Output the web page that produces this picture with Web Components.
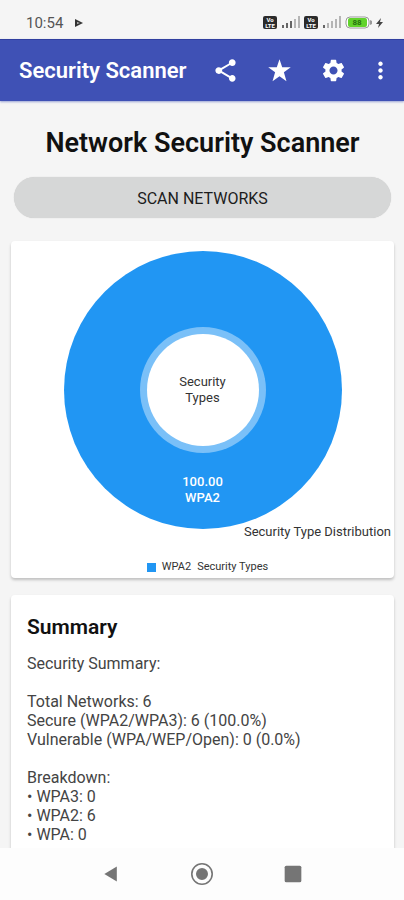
<!DOCTYPE html>
<html lang="en">
<head>
<meta charset="utf-8">
<meta name="viewport" content="width=device-width, initial-scale=1">
<title>Security Scanner</title>
<style>
  body {
    margin: 0;
    font-family: Roboto, "Liberation Sans", sans-serif;
    color: #212121;
    background: #f5f5f5;
  }
</style>
</head>
<body>
<scanner-app></scanner-app>

<script>
class StatusBar extends HTMLElement {
  constructor() {
    super();
    this.attachShadow({ mode: 'open' });
  }

  connectedCallback() {
    const time = this.getAttribute('time');
    const battery = this.getAttribute('battery');
    const volte = `
      <svg width="14" height="13" viewBox="0 0 14 13">
        <rect width="14" height="13" rx="2" fill="#2b2b2b"/>
        <text x="7" y="6" class="tiny">Vo</text>
        <text x="7" y="12" class="tiny">LTE</text>
      </svg>`;
    const signal = (strong) => `
      <svg width="19" height="13" viewBox="0 0 19 13">
        ${[3, 5, 7, 9, 12].map((h, i) =>
          `<rect x="${1 + i * 4}" y="${12 - h}" width="2" height="${h}" fill="${i < strong ? '#666' : '#b5b5b5'}"/>`
        ).join('')}
      </svg>`;

    this.shadowRoot.innerHTML = `
      <style>
        :host {
          display: flex;
          align-items: center;
          flex: none;
          box-sizing: border-box;
          height: 39px;
          padding: 6px 21px 0 26px;
          font-size: 15px;
          color: #555;
        }
        .play { margin-left: 12px; }
        .icons {
          display: flex;
          align-items: center;
          gap: 4px;
          margin-left: auto;
        }
        .tiny {
          font-size: 6px;
          font-weight: 700;
          text-anchor: middle;
          fill: #fff;
        }
        .level {
          font-size: 8px;
          font-weight: 700;
          text-anchor: middle;
          fill: #27700f;
        }
      </style>
      <span>${time}</span>
      <svg class="play" width="8" height="8" viewBox="0 0 8 8">
        <path d="M0 0 8 4 0 8Z" fill="#333"/><path d="M2 3 5 4 2 5Z" fill="#bbb"/>
      </svg>
      <div class="icons">
        ${volte}${signal(3)}${volte}${signal(1)}
        <svg width="27" height="13" viewBox="0 0 27 13">
          <rect x="1" y="1" width="23" height="11" rx="4" fill="#fff" stroke="#999"/>
          <rect x="3" y="2" width="19" height="9" rx="2" fill="#62d32c"/>
          <path d="M25 4v5l2-1V5Z" fill="#999"/>
          <text x="12" y="9" class="level">${battery}</text>
        </svg>
        <svg width="7" height="12" viewBox="0 0 7 12">
          <path d="M5 1 0 7h3L2 11 7 5H4Z" fill="#444"/>
        </svg>
      </div>
    `;
  }
}

class AppBar extends HTMLElement {
  constructor() {
    super();
    this.attachShadow({ mode: 'open' });
    this.shadowRoot.innerHTML = `
      <style>
        :host {
          display: flex;
          align-items: center;
          flex: none;
          box-sizing: border-box;
          height: 62px;
          padding: 0 4px 0 19px;
          background: #3f51b5;
          border-top: 1px solid #303f9f;
          box-shadow: 0 1px 2px rgba(63, 81, 181, 0.5);
          color: #fff;
        }
        h1 {
          flex: 1;
          margin: 0;
          font-size: 22px;
          line-height: 28px;
          font-weight: 600;
          white-space: nowrap;
        }
        nav { display: flex; }
      </style>
      <h1><slot></slot></h1>
      <nav><slot name="action"></slot></nav>
    `;
  }
}

class IconButton extends HTMLElement {
  static paths = {
    share: 'M18 16.08c-.76 0-1.44.3-1.96.77L8.91 12.7c.05-.23.09-.46.09-.7s-.04-.47-.09-.7l7.05-4.11c.54.5 1.25.81 2.04.81 1.66 0 3-1.34 3-3s-1.34-3-3-3-3 1.34-3 3c0 .24.04.47.09.7L8.04 9.81C7.5 9.31 6.79 9 6 9c-1.66 0-3 1.34-3 3s1.34 3 3 3c.79 0 1.5-.31 2.04-.81l7.12 4.16c-.05.21-.08.43-.08.65 0 1.61 1.31 2.92 2.92 2.92s2.92-1.31 2.92-2.92-1.31-2.92-2.92-2.92z',
    star: 'M12 2l2.4 7.1H22l-6.1 4.5L18.2 21.5 12 17l-6.2 4.5 2.3-7.9L2 9.1h7.6z',
    settings: 'M19.14 12.94c.04-.3.06-.61.06-.94 0-.32-.02-.64-.07-.94l2.03-1.58c.18-.14.23-.41.12-.61l-1.92-3.32c-.12-.22-.37-.29-.59-.22l-2.39.96c-.5-.38-1.03-.7-1.62-.94l-.36-2.54c-.04-.24-.24-.41-.48-.41h-3.84c-.24 0-.43.17-.47.41l-.36 2.54c-.59.24-1.13.57-1.62.94l-2.39-.96c-.22-.08-.47 0-.59.22L2.74 8.87c-.12.21-.08.47.12.61l2.03 1.58c-.05.3-.09.63-.09.94s.02.64.07.94l-2.03 1.58c-.18.14-.23.41-.12.61l1.92 3.32c.12.22.37.29.59.22l2.39-.96c.5.38 1.03.7 1.62.94l.36 2.54c.05.24.24.41.48.41h3.84c.24 0 .44-.17.47-.41l.36-2.54c.59-.24 1.13-.56 1.62-.94l2.39.96c.22.08.47 0 .59-.22l1.92-3.32c.12-.22.07-.47-.12-.61l-2.01-1.58zM12 15.6c-1.98 0-3.6-1.62-3.6-3.6s1.62-3.6 3.6-3.6 3.6 1.62 3.6 3.6-1.62 3.6-3.6 3.6z',
    more: 'M12 8c1.1 0 2-.9 2-2s-.9-2-2-2-2 .9-2 2 .9 2 2 2zm0 2c-1.1 0-2 .9-2 2s.9 2 2 2 2-.9 2-2-.9-2-2-2zm0 6c-1.1 0-2 .9-2 2s.9 2 2 2 2-.9 2-2-.9-2-2-2z',
    back: 'M19 3v18L4 12z',
    home: 'M12 1a11 11 0 1 0 0 22 11 11 0 0 0 0-22zm0 1.6a9.4 9.4 0 1 1 0 18.800 9.400 9.400 0 0 1 0-18.800zM12 6a6 6 0 1 0 0 12 6 6 0 0 0 0-12z',
    recents: 'M4 2h16a2 2 0 0 1 2 2v16a2 2 0 0 1-2 2H4a2 2 0 0 1-2-2V4a2 2 0 0 1 2-2z'
  };

  constructor() {
    super();
    this.attachShadow({ mode: 'open' });
  }

  connectedCallback() {
    const icon = this.getAttribute('icon');
    const label = this.getAttribute('label');

    this.shadowRoot.innerHTML = `
      <style>
        :host { display: block; }
        button {
          display: flex;
          align-items: center;
          justify-content: center;
          width: var(--button-width, 54px);
          height: 48px;
          padding: 0;
          border: 0;
          background: none;
          color: inherit;
          cursor: pointer;
        }
        svg {
          width: var(--icon-size, 27px);
          height: var(--icon-size, 27px);
          fill: currentColor;
          fill-rule: evenodd;
        }
      </style>
      <button type="button" aria-label="${label}">
        <svg viewBox="0 0 24 24" aria-hidden="true"><path d="${IconButton.paths[icon]}"/></svg>
      </button>
    `;
  }
}

class ScanButton extends HTMLElement {
  constructor() {
    super();
    this.attachShadow({ mode: 'open' });
    this.shadowRoot.innerHTML = `
      <style>
        :host { display: block; }
        button {
          display: block;
          width: 100%;
          height: 41px;
          padding: 2px 0 0;
          border: 0;
          border-radius: 21px;
          background: #d6d7d7;
          box-shadow: 0 0 1px rgba(0, 0, 0, 0.2);
          color: #1c1c1c;
          font: inherit;
          font-size: 16px;
          text-transform: uppercase;
          cursor: pointer;
        }
      </style>
      <button type="button"><slot></slot></button>
    `;
  }
}

class CardPanel extends HTMLElement {
  constructor() {
    super();
    this.attachShadow({ mode: 'open' });
    this.shadowRoot.innerHTML = `
      <style>
        :host {
          display: block;
          background: #fff;
          border-radius: 4px;
          box-shadow: 0 2px 3px rgba(0, 0, 0, 0.22);
        }
      </style>
      <slot></slot>
    `;
  }
}

class DonutChart extends HTMLElement {
  constructor() {
    super();
    this.attachShadow({ mode: 'open' });
  }

  connectedCallback() {
    const type = this.getAttribute('type');
    const value = this.getAttribute('value');
    const description = this.getAttribute('description');
    const series = this.getAttribute('series');

    this.shadowRoot.innerHTML = `
      <style>
        :host {
          display: block;
          padding: 10px 3px 3px;
        }
        figure {
          display: flex;
          flex-direction: column;
          margin: 0;
          font-size: 13px;
          line-height: 16px;
          color: #333;
        }
        .donut {
          display: grid;
          grid-template-rows: 1fr 55px;
          align-self: center;
          justify-items: center;
          width: 278px;
          max-width: 100%;
          text-align: center;
        }
        svg {
          display: block;
          grid-area: 1 / 1 / 3 / 2;
          width: 100%;
        }
        .hole {
          grid-area: 1 / 1 / 3 / 2;
          align-self: center;
          width: 60px;
        }
        .slice {
          grid-area: 2 / 1;
          color: #fff;
          font-weight: 500;
        }
        .description {
          align-self: flex-end;
          margin-top: -5px;
        }
        figcaption {
          display: flex;
          align-items: center;
          justify-content: center;
          gap: 6px;
          margin-top: 19px;
          padding-left: 10px;
          font-size: 11px;
        }
        .swatch {
          width: 9px;
          height: 9px;
          background: #2196f3;
        }
      </style>
      <figure>
        <div class="donut">
          <svg viewBox="0 0 278 278" aria-hidden="true">
            <circle cx="139" cy="139" r="139" fill="#2196f3"/>
            <circle cx="139" cy="139" r="63" fill="#7ac0f8"/>
            <circle cx="139" cy="139" r="56" fill="#fff"/>
          </svg>
          <div class="hole">${series}</div>
          <div class="slice">${value}<br>${type}</div>
        </div>
        <div class="description">${description}</div>
        <figcaption>
          <span class="swatch"></span>
          <span>${type}</span>
          <span>${series}</span>
        </figcaption>
      </figure>
    `;
  }
}

class SecuritySummary extends HTMLElement {
  constructor() {
    super();
    this.attachShadow({ mode: 'open' });
    this.shadowRoot.innerHTML = `
      <style>
        :host {
          display: block;
          padding: 18px 16px;
          font-size: 16px;
          line-height: 19px;
          color: #444;
        }
        h3 {
          margin: 0 0 13px;
          font-size: 21px;
          line-height: 28px;
          font-weight: 600;
          color: #111;
        }
        p { margin: 0 0 19px; }
        ul {
          margin: -19px 0 0;
          padding: 0;
          list-style: none;
        }
        li::before { content: "• "; }
      </style>
      <h3>Summary</h3>
      <p>Security Summary:</p>
      <p>
        Total Networks: 6<br>
        Secure (WPA2/WPA3): 6 (100.0%)<br>
        Vulnerable (WPA/WEP/Open): 0 (0.0%)
      </p>
      <p>Breakdown:</p>
      <ul>
        <li>WPA3: 0</li>
        <li>WPA2: 6</li>
        <li>WPA: 0</li>
      </ul>
    `;
  }
}

class SystemNav extends HTMLElement {
  constructor() {
    super();
    this.attachShadow({ mode: 'open' });
    this.shadowRoot.innerHTML = `
      <style>
        :host {
          display: flex;
          align-items: center;
          justify-content: center;
          flex: none;
          height: 52px;
          background: #fdfdfd;
          color: #757575;
          --button-width: 91px;
          --icon-size: 24px;
        }
        .small { --icon-size: 20px; }
      </style>
      <icon-button class="small" icon="back" label="Back"></icon-button>
      <icon-button icon="home" label="Home"></icon-button>
      <icon-button class="small" icon="recents" label="Recent apps"></icon-button>
    `;
  }
}

class ScannerApp extends HTMLElement {
  constructor() {
    super();
    this.attachShadow({ mode: 'open' });
    this.shadowRoot.innerHTML = `
      <style>
        :host {
          display: flex;
          flex-direction: column;
          height: 100vh;
        }
        main {
          display: flex;
          flex-direction: column;
          flex: 1;
          min-height: 0;
          overflow: hidden;
          padding: 24px 10px 0 11px;
        }
        main > * { flex: none; }
        h2 {
          margin: 0 0 16px;
          font-size: 27px;
          line-height: 36px;
          font-weight: 600;
          text-align: center;
          color: #111;
        }
        scan-button { margin: 0 3px 23px; }
        card-panel { margin-bottom: 17px; }
        .overflow { --button-width: 40px; }
      </style>
      <status-bar time="10:54" battery="88"></status-bar>
      <app-bar>
        Security Scanner
        <icon-button slot="action" icon="share" label="Share"></icon-button>
        <icon-button slot="action" icon="star" label="Rate"></icon-button>
        <icon-button slot="action" icon="settings" label="Settings"></icon-button>
        <icon-button slot="action" class="overflow" icon="more" label="More options"></icon-button>
      </app-bar>
      <main>
        <h2>Network Security Scanner</h2>
        <scan-button>Scan Networks</scan-button>
        <card-panel>
          <donut-chart type="WPA2" value="100.00" series="Security Types" description="Security Type Distribution"></donut-chart>
        </card-panel>
        <card-panel>
          <security-summary></security-summary>
        </card-panel>
      </main>
      <system-nav></system-nav>
    `;
  }
}

customElements.define('status-bar', StatusBar);
customElements.define('app-bar', AppBar);
customElements.define('icon-button', IconButton);
customElements.define('scan-button', ScanButton);
customElements.define('card-panel', CardPanel);
customElements.define('donut-chart', DonutChart);
customElements.define('security-summary', SecuritySummary);
customElements.define('system-nav', SystemNav);
customElements.define('scanner-app', ScannerApp);
</script>
</body>
</html>
